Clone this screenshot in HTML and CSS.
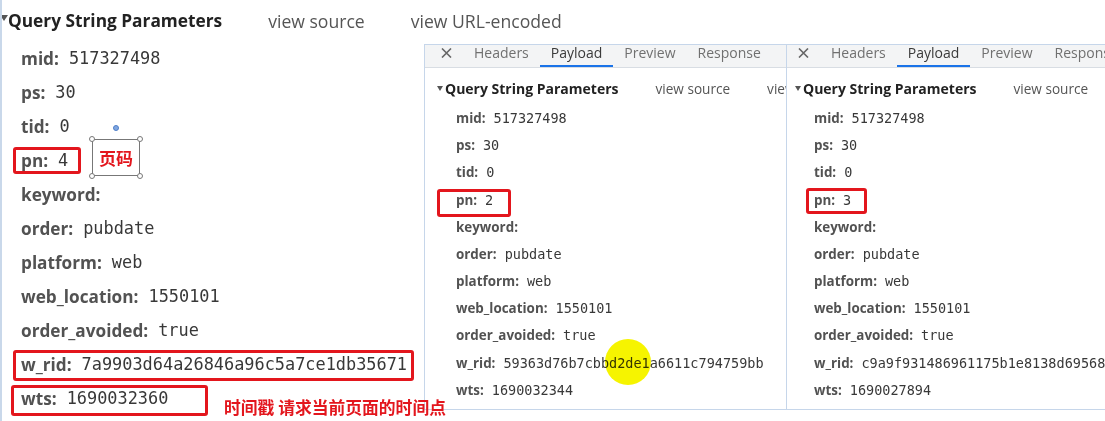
FILE: index.html
```html
<!DOCTYPE html>
<html lang="en">
<head>
<meta charset="utf-8">
<title>Query String Parameters</title>
<link rel="stylesheet" href="styles.css">
</head>
<body>
<div class="stage">
  <section class="payload payload-lg">
    <div class="qs-head">
      <span class="caret"></span><span class="qs-title">Query String Parameters</span>
      <span class="qs-link">view source</span><span class="qs-link qs-link-last">view URL-encoded</span>
    </div>
    <ul class="qs-list">
      <li><span class="k">mid:</span><span class="v">517327498</span></li>
      <li><span class="k">ps:</span><span class="v">30</span></li>
      <li><span class="k">tid:</span><span class="v">0</span></li>
      <li><span class="k">pn:</span><span class="v">4</span></li>
      <li><span class="k">keyword:</span><span class="v"></span></li>
      <li><span class="k">order:</span><span class="v">pubdate</span></li>
      <li><span class="k">platform:</span><span class="v">web</span></li>
      <li><span class="k">web_location:</span><span class="v">1550101</span></li>
      <li><span class="k">order_avoided:</span><span class="v">true</span></li>
      <li><span class="k">w_rid:</span><span class="v">7a9903d64a26846a96c5a7ce1db35671</span></li>
      <li><span class="k">wts:</span><span class="v">1690032360</span></li>
    </ul>
  </section>

  <div class="win win-a">
    <div class="tabs">
      <span class="tab-x"><svg width="11" height="10" viewBox="0 0 11 10"><path d="M1 0.5 L10 9.5 M10 0.5 L1 9.5" stroke="#666" stroke-width="1.6" fill="none"/></svg></span>
      <span class="tab">Headers</span><span class="tab active">Payload</span><span class="tab">Preview</span><span class="tab">Response</span>
    </div>
    <section class="payload payload-sm">
      <div class="qs-head">
        <span class="caret"></span><span class="qs-title">Query String Parameters</span>
        <span class="qs-link">view source</span><span class="qs-link qs-link-last">view URL-encoded</span>
      </div>
      <ul class="qs-list">
        <li><span class="k">mid:</span><span class="v">517327498</span></li>
        <li><span class="k">ps:</span><span class="v">30</span></li>
        <li><span class="k">tid:</span><span class="v">0</span></li>
        <li><span class="k">pn:</span><span class="v">2</span></li>
        <li><span class="k">keyword:</span><span class="v"></span></li>
        <li><span class="k">order:</span><span class="v">pubdate</span></li>
        <li><span class="k">platform:</span><span class="v">web</span></li>
        <li><span class="k">web_location:</span><span class="v">1550101</span></li>
        <li><span class="k">order_avoided:</span><span class="v">true</span></li>
        <li><span class="k">w_rid:</span><span class="v">59363d76b7cbbd2de1a6611c794759bb</span></li>
        <li><span class="k">wts:</span><span class="v">1690032344</span></li>
      </ul>
    </section>
  </div>

  <div class="win win-b">
    <div class="tabs">
      <span class="tab-x"><svg width="11" height="10" viewBox="0 0 11 10"><path d="M1 0.5 L10 9.5 M10 0.5 L1 9.5" stroke="#666" stroke-width="1.6" fill="none"/></svg></span>
      <span class="tab">Headers</span><span class="tab active">Payload</span><span class="tab">Preview</span><span class="tab">Response</span>
    </div>
    <section class="payload payload-sm">
      <div class="qs-head">
        <span class="caret"></span><span class="qs-title">Query String Parameters</span>
        <span class="qs-link">view source</span>
      </div>
      <ul class="qs-list">
        <li><span class="k">mid:</span><span class="v">517327498</span></li>
        <li><span class="k">ps:</span><span class="v">30</span></li>
        <li><span class="k">tid:</span><span class="v">0</span></li>
        <li><span class="k">pn:</span><span class="v">3</span></li>
        <li><span class="k">keyword:</span><span class="v"></span></li>
        <li><span class="k">order:</span><span class="v">pubdate</span></li>
        <li><span class="k">platform:</span><span class="v">web</span></li>
        <li><span class="k">web_location:</span><span class="v">1550101</span></li>
        <li><span class="k">order_avoided:</span><span class="v">true</span></li>
        <li><span class="k">w_rid:</span><span class="v">c9a9f931486961175b1e8138d69568</span></li>
        <li><span class="k">wts:</span><span class="v">1690027894</span></li>
      </ul>
    </section>
  </div>

  <div class="mark mark-pn-l"></div>
  <div class="mark mark-wrid"></div>
  <div class="mark mark-wts"></div>
  <div class="mark mark-pn-a"></div>
  <div class="mark mark-pn-b"></div>
  <div class="dot"></div>
  <div class="label-box">
    <span class="handle h-tl"></span><span class="handle h-tr"></span><span class="handle h-bl"></span><span class="handle h-br"></span>
    <span class="label-text">页码</span>
  </div>
  <div class="note">时间戳 请求当前页面的时间点</div>
  <div class="spot"></div>
</div>
</body>
</html>
```

FILE: styles.css
```css
* { box-sizing: border-box; }
html, body { margin: 0; padding: 0; background: #fff; }
.stage {
  position: relative;
  width: 1105px;
  height: 421px;
  overflow: hidden;
  background: #fff;
  font-family: "Open Sans", "Noto Sans", sans-serif;
}

/* shared payload component */
.payload { color: #333; }
.qs-head { display: flex; align-items: center; white-space: nowrap; overflow: hidden; }
.caret {
  width: 0; height: 0;
  border-left: 4px solid transparent;
  border-right: 4px solid transparent;
  border-top: 6px solid #555;
  flex: none;
}
.qs-title { font-weight: 700; color: #222; flex: none; }
.qs-link { color: #555; flex: none; }
.qs-link-last { flex: 0 1 auto; min-width: 0; overflow: hidden; }
.qs-list { list-style: none; margin: 0; padding: 0; }
.qs-list li { display: flex; align-items: center; white-space: nowrap; }
.k { font-weight: 700; color: #525252; }
.v { font-family: "DejaVu Sans Mono", "Liberation Mono", monospace; color: #383838; }

/* large (background) panel */
.payload-lg {
  height: 421px;
  border-left: 2px solid #c9d8ea;
}
.payload-lg .qs-head { height: 41px; font-size: 17.3px; }
.payload-lg .caret { margin-top: -6px; margin-left: -2px; margin-right: 0; }
.payload-lg .qs-link { margin-left: 46px; font-size: 17.6px; }
.payload-lg .qs-list { padding-left: 19px; }
.payload-lg .qs-list li { height: 34px; font-size: 17.2px; }
.payload-lg .v { font-size: 16.9px; margin-left: 10px; }

/* small windows */
.win {
  position: absolute;
  top: 44px;
  height: 366px;
  background: #fff;
  border: 1px solid #c6d6ea;
  overflow: hidden;
}
.win-a { left: 424px; width: 363px; }
.win-b { left: 786px; width: 340px; }
.tabs {
  display: flex;
  height: 23px;
  background: #f3f4f5;
  border-bottom: 1px solid #d8dde3;
  font-size: 14px;
  color: #707070;
  white-space: nowrap;
}
.tab-x { display: flex; align-items: flex-start; padding-top: 3px; width: 11px; margin-right: 11px; flex: none; }
.win-a .tabs { padding-left: 16px; }
.win-b .tabs { padding-left: 11px; }
.tab { padding: 0 11px; line-height: 16px; height: 22px; flex: none; }
.tab.active { color: #3a3a3a; border-bottom: 2px solid #1a73e8; }

.payload-sm .qs-head { height: 36.4px; padding-top: 4px; font-size: 14px; }
.payload-sm .caret { border-left-width: 3.5px; border-right-width: 3.5px; border-top-width: 5px; margin-right: 2px; }
.win-a .payload-sm .qs-head { padding-left: 12px; }
.win-b .payload-sm .qs-head { padding-left: 8px; }
.payload-sm .qs-link { margin-left: 37px; font-size: 13.6px; }
.win-a .payload-sm .qs-list { padding-left: 31px; }
.win-b .payload-sm .qs-list { padding-left: 27px; }
.payload-sm .qs-list li { height: 27.2px; font-size: 13.4px; }
.payload-sm .v { font-size: 13.5px; margin-left: 8px; }

/* annotations drawn over the screenshot */
.mark {
  position: absolute;
  border: 3px solid #e3161d;
  border-radius: 3px;
}
.mark-pn-l { left: 13px; top: 147px; width: 68px; height: 27px; }
.mark-wrid { left: 13px; top: 350px; width: 401px; height: 31px; }
.mark-wts  { left: 11px; top: 385px; width: 197px; height: 31px; }
.mark-pn-a { left: 437px; top: 189px; width: 74px; height: 28px; }
.mark-pn-b { left: 806px; top: 188px; width: 61px; height: 26px; }

.dot {
  position: absolute;
  left: 113px; top: 125px;
  width: 6px; height: 6px;
  border-radius: 50%;
  background: #7fa6e0;
  border: 1px solid #4f7fc8;
}
.label-box {
  position: absolute;
  left: 92px; top: 139px;
  width: 48px; height: 37px;
  border: 1px solid #777;
  display: flex; align-items: center; justify-content: center;
}
.handle {
  position: absolute;
  width: 6px; height: 6px;
  border-radius: 50%;
  background: #fff;
  border: 1px solid #777;
}
.h-tl { left: -4px; top: -4px; }
.h-tr { right: -4px; top: -4px; }
.h-bl { left: -4px; bottom: -4px; }
.h-br { right: -4px; bottom: -4px; }
.label-text {
  font-family: "Noto Sans CJK SC", sans-serif;
  font-weight: 700;
  font-size: 17px;
  color: #e3161d;
}
.note {
  position: absolute;
  left: 224px; top: 396px;
  font-family: "Noto Sans CJK SC", sans-serif;
  font-weight: 700;
  font-size: 16.8px;
  line-height: 22px;
  color: #e3161d;
  white-space: nowrap;
}
.spot {
  position: absolute;
  left: 605px; top: 339px;
  width: 46px; height: 46px;
  border-radius: 50%;
  background: #f6f400;
  mix-blend-mode: multiply;
  filter: blur(0.6px);
}
```
